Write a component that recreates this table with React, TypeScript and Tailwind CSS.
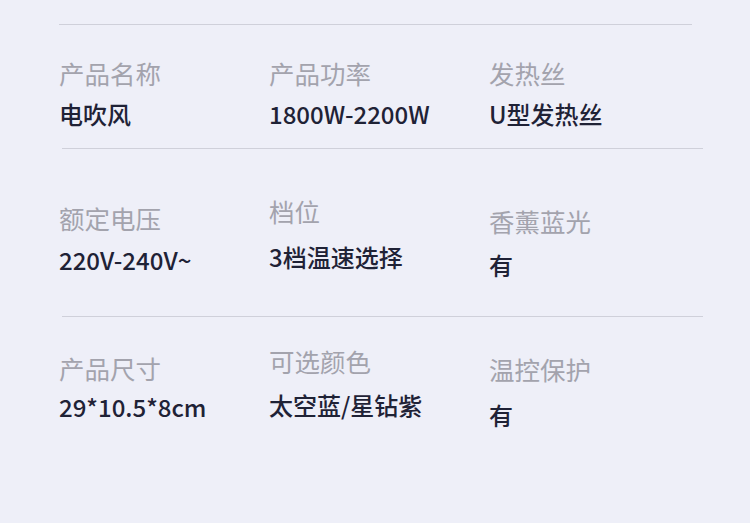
const rows = [
  {
    line: "ml-[59px] w-[633px]",
    cells: [
      { label: "产品名称", value: "电吹风", pt: "pt-[35px]", gap: "mt-[16px]" },
      { label: "产品功率", value: "1800W-2200W", pt: "pt-[35px]", gap: "mt-[16px]" },
      { label: "发热丝", value: "U型发热丝", pt: "pt-[35px]", gap: "mt-[16px]" },
    ],
  },
  {
    line: "ml-[62px] w-[641px]",
    cells: [
      { label: "额定电压", value: "220V-240V~", pt: "pt-[56px]", gap: "mt-[17px]" },
      { label: "档位", value: "3档温速选择", pt: "pt-[49px]", gap: "mt-[21px]" },
      { label: "香薰蓝光", value: "有", pt: "pt-[59px]", gap: "mt-[19px]" },
    ],
  },
  {
    line: "ml-[62px] w-[641px]",
    cells: [
      { label: "产品尺寸", value: "29*10.5*8cm", pt: "pt-[38px]", gap: "mt-[14px]" },
      { label: "可选颜色", value: "太空蓝/星钻紫", pt: "pt-[31px]", gap: "mt-[19px]" },
      { label: "温控保护", value: "有", pt: "pt-[39px]", gap: "mt-[21px]" },
    ],
  },
];

export default function App() {
  return (
    <div
      className="w-[750px] h-[523px] overflow-hidden bg-[#eeeff8] pt-[24px]"
      style={{ fontFamily: '"Noto Sans CJK SC", "Noto Sans", sans-serif' }}
    >
      {rows.map((row, i) => (
        <div key={i} className={i === 0 ? "h-[124px]" : "h-[168px]"}>
          <div className={`h-px bg-[#cfd0da] ${row.line}`} />
          <div className="grid grid-cols-[210px_220px_1fr] pl-[59px]">
            {row.cells.map((c) => (
              <div key={c.label} className={`flex flex-col ${c.pt}`}>
                <span className="text-[25.5px] leading-[26px] text-[#a3a3ad]">{c.label}</span>
                <span className={`text-[24px] leading-[24px] font-medium text-[#1f2236] ${c.gap}`}>
                  {c.value}
                </span>
              </div>
            ))}
          </div>
        </div>
      ))}
    </div>
  );
}
